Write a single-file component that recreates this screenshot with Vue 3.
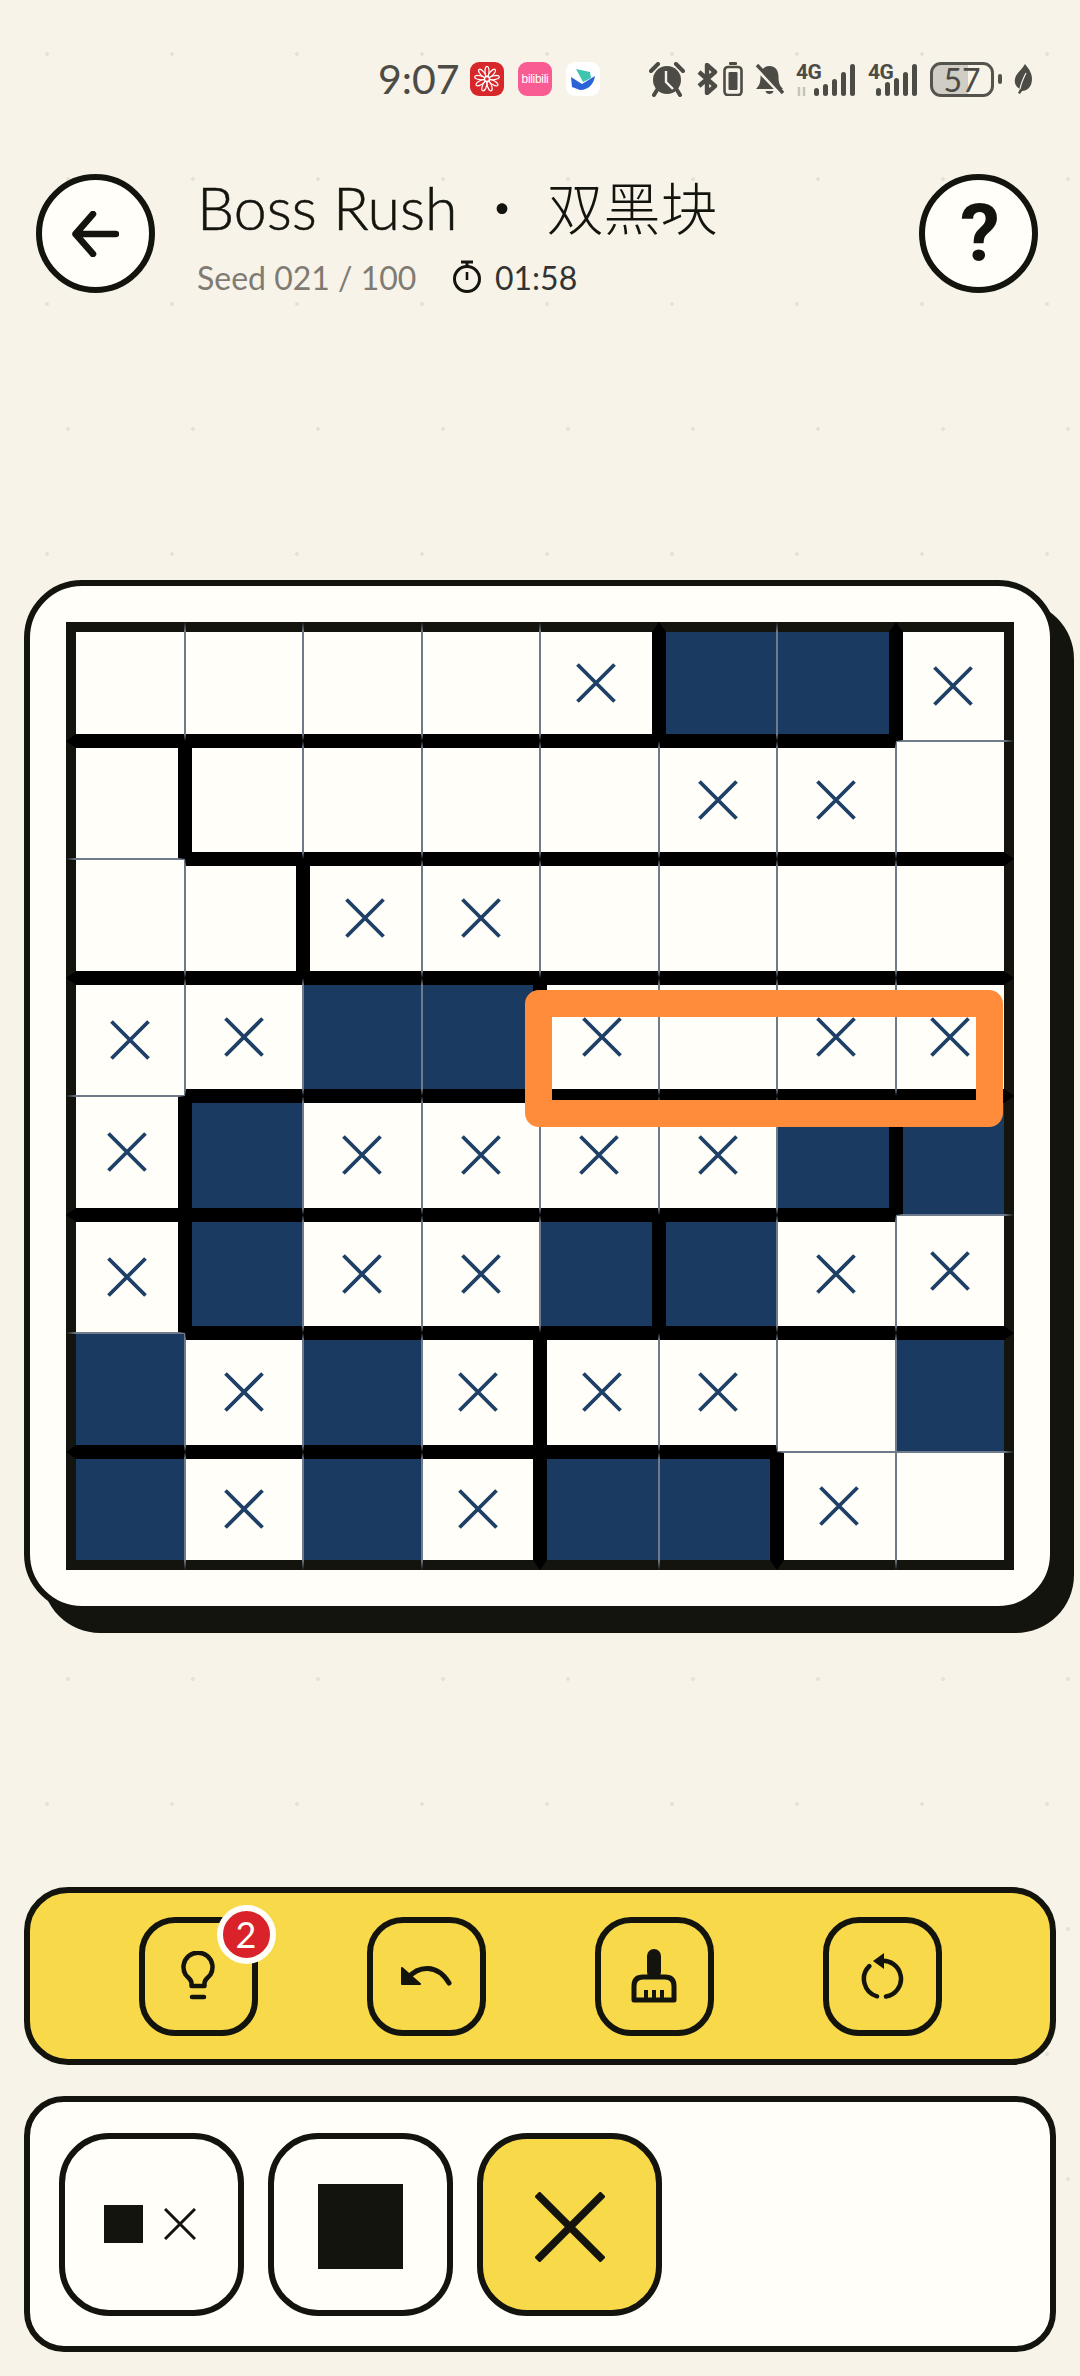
<script setup>
import { computed } from 'vue';

// . empty, x cross, f filled
const rows = [
  '....xffx',
  '.....xx.',
  '..xx....',
  'xxffx.xx',
  'xfxxxxff',
  'xfxxffxx',
  'fxfxxx.f',
  'fxfxffx.',
];

// thick line below row r, listed by column
const thickBelow = [
  [0, 1, 2, 3, 4, 5, 6],
  [1, 2, 3, 4, 5, 6, 7],
  [0, 1, 2, 3, 4, 5, 6, 7],
  [1, 2, 3, 4, 5, 6, 7],
  [0, 1, 2, 3, 4, 5, 6],
  [1, 2, 3, 4, 5, 6, 7],
  [0, 1, 2, 3, 4, 5],
];

// thick line right of column c, listed by row
const thickRight = [
  [1, 4, 5],
  [2],
  [],
  [3, 6, 7],
  [0, 5],
  [7],
  [0, 4],
];

const cells = computed(() => {
  const out = [];
  rows.forEach((row, r) => {
    row.split('').forEach((kind, c) => {
      out.push({
        id: r + '-' + c,
        kind,
        classes: {
          filled: kind === 'f',
          'edge-top': r === 0,
          'edge-bottom': r === 7,
          'edge-left': c === 0,
          'edge-right': c === 7,
          'thick-top': r > 0 && thickBelow[r - 1].includes(c),
          'thick-bottom': r < 7 && thickBelow[r].includes(c),
          'thick-left': c > 0 && thickRight[c - 1].includes(r),
          'thick-right': c < 7 && thickRight[c].includes(r),
        },
      });
    });
  });
  return out;
});

const petals = [0, 40, 80, 120, 160, 200, 240, 280, 320];
</script>

<template>
  <div class="page">
    <div class="status">
      <div class="status-left">
        <span class="clock">9:07</span>
        <div class="app app-red">
          <svg width="26" height="26" viewBox="0 0 26 26">
            <ellipse
              v-for="a in petals"
              :key="a"
              cx="13"
              cy="5.5"
              rx="2"
              ry="5"
              fill="none"
              stroke="#fff"
              stroke-width="1.2"
              :transform="'rotate(' + a + ' 13 13)'"
            />
            <circle cx="13" cy="13" r="2.4" fill="#d8272a" stroke="#fff" stroke-width="1.2" />
          </svg>
        </div>
        <div class="app app-pink"><span>bilibili</span></div>
        <div class="app app-white">
          <svg width="26" height="24" viewBox="0 0 26 24">
            <path d="M6 2 L20 5 L21 11 L13 15 Z" fill="#3fc4b0" />
            <path d="M1 10 L12 17 L25 9 C24 16 19 23 10 23 L2 20 Z" fill="#2a62d8" />
          </svg>
        </div>
      </div>
      <div class="status-right">
        <svg class="alarm" width="36" height="35" viewBox="0 0 36 35">
          <path d="M2 9 L9 2 M34 9 L27 2" stroke="#4c4b46" stroke-width="4" stroke-linecap="round" />
          <path d="M8 28 L5 33 M28 28 L31 33" stroke="#4c4b46" stroke-width="4" stroke-linecap="round" />
          <circle cx="18" cy="18" r="14" fill="#4c4b46" />
          <path d="M17 9 V20 L24 27" fill="none" stroke="#f7f3e8" stroke-width="2.4" />
        </svg>
        <div class="bt-batt">
          <svg width="21" height="32" viewBox="0 0 21 32">
            <path d="M2 9 L18 23 L10 30 V2 L18 9 L2 23" fill="none" stroke="#4c4b46" stroke-width="4.4" stroke-linejoin="round" />
          </svg>
          <svg width="20" height="34" viewBox="0 0 20 34">
            <rect x="6" y="0" width="8" height="3" rx="1" fill="#4c4b46" />
            <rect x="1.5" y="5" width="17" height="28" rx="3.5" fill="none" stroke="#4c4b46" stroke-width="2.6" />
            <rect x="5.5" y="10" width="9" height="18" rx="1" fill="#4c4b46" />
          </svg>
        </div>
        <svg width="29" height="33" viewBox="0 0 29 33">
          <path d="M14.5 3 C21 3 23.5 8 23.5 14 C23.5 20 25 23 28 26 H1 C4 23 5.5 20 5.5 14 C5.5 8 8 3 14.5 3 Z" fill="#4c4b46" />
          <path d="M10.5 28 H18.5 C18 32 11 32 10.5 28 Z" fill="#4c4b46" />
          <path d="M1 4 L27 31" stroke="#f7f3e8" stroke-width="5" />
          <path d="M2 2 L28 30" stroke="#4c4b46" stroke-width="3.4" />
        </svg>
        <div class="signal">
          <span class="net">4G</span>
          <svg width="60" height="33" viewBox="0 0 60 33">
            <path d="M3 24 V33 M8 24 V33" stroke="#c6c3bb" stroke-width="2.5" />
            <rect x="18" y="25" width="5" height="8" rx="2.5" fill="#4c4b46" />
            <rect x="27" y="21" width="5" height="12" rx="2.5" fill="#4c4b46" />
            <rect x="36" y="16" width="5" height="17" rx="2.5" fill="#4c4b46" />
            <rect x="45" y="9" width="5" height="24" rx="2.5" fill="#4c4b46" />
            <rect x="54" y="1" width="5" height="32" rx="2.5" fill="#4c4b46" />
          </svg>
        </div>
        <div class="signal">
          <span class="net">4G</span>
          <svg width="50" height="33" viewBox="0 0 50 33">
            <rect x="8" y="25" width="5" height="8" rx="2.5" fill="#4c4b46" />
            <rect x="17" y="19" width="5" height="14" rx="2.5" fill="#4c4b46" />
            <rect x="26" y="15" width="5" height="18" rx="2.5" fill="#4c4b46" />
            <rect x="35" y="9" width="5" height="24" rx="2.5" fill="#4c4b46" />
            <rect x="44" y="1" width="5" height="32" rx="2.5" fill="#4c4b46" />
          </svg>
        </div>
        <div class="battery">
          <div class="battery-body"><span>57</span></div>
          <div class="battery-nub"></div>
        </div>
        <svg width="18" height="30" viewBox="0 0 18 30">
          <path d="M11 0 C16 6 18 10 18 15 C18 23 13 27 8 27 L6 30 L4 29 L6 25 C2 23 0 19 1 15 C2 9 8 6 11 0 Z" fill="#4c4b46" />
          <path d="M6 25 C7 19 9 15 12 9" fill="none" stroke="#f7f3e8" stroke-width="1.2" />
        </svg>
      </div>
    </div>

    <div class="header">
      <button class="round-btn">
        <svg width="47" height="46" viewBox="0 0 47 46">
          <path d="M21 3 L3.5 23 L21 43 M3.5 23 H44" fill="none" stroke="#14140f" stroke-width="6.5" stroke-linecap="round" stroke-linejoin="round" />
        </svg>
      </button>
      <div class="title-block">
        <div class="title">Boss Rush <span class="dot">・</span> <span class="cjk">双黑块</span></div>
        <div class="sub">
          <span class="seed">Seed 021 / 100</span>
          <svg class="timer" width="30" height="34" viewBox="0 0 30 34">
            <path d="M9 2 H21 M15 2 V7" stroke="#14140f" stroke-width="3" />
            <circle cx="15" cy="19" r="12.5" fill="none" stroke="#14140f" stroke-width="3" />
            <path d="M15 12 V20" stroke="#14140f" stroke-width="2.6" />
          </svg>
          <span class="time">01:58</span>
        </div>
      </div>
      <button class="round-btn help">?</button>
    </div>

    <div class="card">
      <div class="board">
        <div v-for="cell in cells" :key="cell.id" class="cell" :class="cell.classes">
          <svg v-if="cell.kind === 'x'" width="40" height="40" viewBox="0 0 40 40">
            <path d="M1.5 1.5 L38.5 38.5 M38.5 1.5 L1.5 38.5" stroke="#1e3f66" stroke-width="3.8" />
          </svg>
        </div>
        <div class="hint-box"></div>
      </div>
    </div>

    <div class="toolbar">
      <button class="tool">
        <svg width="34" height="50" viewBox="0 0 34 50">
          <path d="M10.5 35 V32 C10.5 28.5 7 27 4.5 23.5 A14.5 14.5 0 1 1 29.5 23.5 C27 27 23.5 28.5 23.5 32 V35 Z" fill="none" stroke="#14140f" stroke-width="4.5" stroke-linejoin="round" />
          <path d="M11 46 H23" stroke="#14140f" stroke-width="4.5" stroke-linecap="round" />
        </svg>
        <span class="badge">2</span>
      </button>
      <button class="tool">
        <svg width="52" height="24" viewBox="0 0 52 24">
          <path d="M2 4 L2 20 L20 20 Z" fill="#14140f" stroke="#14140f" stroke-width="2" stroke-linejoin="round" />
          <path d="M8 14 C18 2 37 -1 49 19" fill="none" stroke="#14140f" stroke-width="5" stroke-linecap="round" />
        </svg>
      </button>
      <button class="tool">
        <svg width="46" height="54" viewBox="0 0 46 54">
          <rect x="16" y="0" width="14" height="30" rx="7" fill="#14140f" />
          <path d="M3 51 V37 Q3 28 12 28 H34 Q43 28 43 37 V51 Z" fill="none" stroke="#14140f" stroke-width="5" stroke-linejoin="round" />
          <path d="M15 41 V51 M23 41 V51 M31 41 V51" stroke="#14140f" stroke-width="4" />
        </svg>
      </button>
      <button class="tool">
        <svg width="44" height="46" viewBox="0 0 44 46">
          <path d="M20 8 A18 18 0 0 1 26 43.5 M17 43.3 A18 18 0 0 1 9.3 13.2" fill="none" stroke="#14140f" stroke-width="4.5" stroke-linecap="round" />
          <path d="M24 0 L24 16 L13 8 Z" fill="#14140f" />
        </svg>
      </button>
    </div>

    <div class="panel">
      <button class="mode">
        <span class="mini-square"></span>
        <svg width="32" height="32" viewBox="0 0 32 32">
          <path d="M1 1 L31 31 M31 1 L1 31" stroke="#14140f" stroke-width="3" />
        </svg>
      </button>
      <button class="mode">
        <span class="big-square"></span>
      </button>
      <button class="mode active">
        <svg class="big-x" width="70" height="70" viewBox="0 0 70 70">
          <path d="M2 2 L68 68 M68 2 L2 68" stroke="#14140f" stroke-width="7.5" />
        </svg>
      </button>
    </div>
  </div>
</template>

<style scoped>
.page {
  width: 1080px;
  height: 2376px;
  overflow: hidden;
  display: flex;
  flex-direction: column;
  background-color: #f7f3e8;
  background-image:
    radial-gradient(circle at 47px 54px, #e6e2d8 1.6px, transparent 2.2px),
    radial-gradient(circle at 68px 179px, #e6e2d8 1.6px, transparent 2.2px);
  background-size: 125px 250px;
  font-family: Lato, "Noto Sans CJK SC", sans-serif;
}

button {
  padding: 0;
  font-family: inherit;
  cursor: pointer;
}

/* status bar */
.status {
  display: flex;
  align-items: center;
  height: 36px;
  margin-top: 61px;
  padding-left: 378px;
}

.status-left {
  display: flex;
  align-items: center;
  gap: 14px;
}

.clock {
  width: 78px;
  font-size: 41px;
  line-height: 36px;
  color: #4c4b46;
}

.app {
  width: 34px;
  height: 34px;
  border-radius: 9px;
  display: flex;
  align-items: center;
  justify-content: center;
}

.app-red {
  background: #d8272a;
}

.app-pink {
  background: #f95b93;
  color: #fff;
  font-family: "Liberation Sans", sans-serif;
  font-size: 12px;
  letter-spacing: -0.3px;
}

.app-white {
  background: #fff;
}

.status-right {
  display: flex;
  align-items: center;
  gap: 12px;
  margin-left: 49px;
}

.bt-batt {
  display: flex;
  align-items: center;
  gap: 5px;
}

.signal {
  position: relative;
  height: 33px;
}

.net {
  position: absolute;
  left: 0;
  top: 0;
  font-family: Roboto, sans-serif;
  font-size: 21px;
  font-weight: 700;
  line-height: 18px;
  letter-spacing: -0.5px;
  color: #4c4b46;
}

.battery {
  display: flex;
  align-items: center;
  gap: 4px;
}

.battery-body {
  box-sizing: border-box;
  width: 64px;
  height: 35px;
  border: 3px solid #55534e;
  border-radius: 11px;
  background: linear-gradient(to right, #d0cdc5 60%, transparent 60%);
  display: flex;
  align-items: center;
  justify-content: center;
  font-size: 32px;
  color: #4c4b46;
}

.battery-nub {
  width: 4px;
  height: 10px;
  border-radius: 2px;
  background: #55534e;
}

/* header */
.header {
  display: flex;
  align-items: flex-start;
  height: 119px;
  margin-top: 77px;
  padding: 0 42px 0 36px;
}

.round-btn {
  box-sizing: border-box;
  flex: none;
  width: 119px;
  height: 119px;
  border: 6px solid #14140f;
  border-radius: 50%;
  background: #fffef8;
  display: flex;
  align-items: center;
  justify-content: center;
}

.help {
  padding-left: 3px;
  font-family: Roboto, sans-serif;
  font-size: 80px;
  font-weight: 700;
  color: #14140f;
  margin-left: auto;
}

.title-block {
  margin-left: 42px;
}

.title {
  margin-top: -4px;
  font-size: 59px;
  font-weight: 300;
  line-height: 70px;
  color: #14140f;
  -webkit-text-stroke: 0.5px #14140f;
  white-space: nowrap;
}

.dot,
.cjk {
  font-family: "Noto Sans CJK SC", sans-serif;
  font-size: 57px;
  -webkit-text-stroke: 0;
}

.sub {
  display: flex;
  align-items: center;
  height: 40px;
  margin-top: 14px;
  font-size: 32px;
  white-space: nowrap;
}

.seed {
  width: 219px;
  color: #7f7b73;
}

.timer {
  margin-left: 36px;
}

.time {
  margin-left: 13px;
  color: #333;
}

/* board */
.card {
  box-sizing: border-box;
  width: 1032px;
  height: 1032px;
  margin: 287px 0 0 24px;
  padding: 36px;
  border: 6px solid #14140f;
  border-radius: 58px;
  background: #fffef8;
  box-shadow: 18px 21px 0 #14140f;
}

.board {
  position: relative;
  width: 948px;
  height: 948px;
  display: grid;
  grid-template-columns: repeat(8, 1fr);
  grid-template-rows: repeat(8, 1fr);
}

.cell {
  box-sizing: border-box;
  border: 1px solid #6f7b8a;
  background: #fffef8;
  display: flex;
  align-items: center;
  justify-content: center;
}

.filled {
  background: #1a3a62;
}

.thick-top {
  border-top: 7px solid #000;
}

.thick-bottom {
  border-bottom: 7px solid #000;
}

.thick-left {
  border-left: 7px solid #000;
}

.thick-right {
  border-right: 7px solid #000;
}

.edge-top {
  border-top: 10px solid #14140f;
}

.edge-bottom {
  border-bottom: 10px solid #14140f;
}

.edge-left {
  border-left: 10px solid #14140f;
}

.edge-right {
  border-right: 10px solid #14140f;
}

.hint-box {
  position: absolute;
  left: 459px;
  top: 368px;
  box-sizing: border-box;
  width: 478px;
  height: 137px;
  border: 27px solid #ff8c3a;
  border-radius: 14px;
}

/* toolbar */
.toolbar {
  box-sizing: border-box;
  width: 1032px;
  height: 178px;
  margin: 275px 0 0 24px;
  border: 6px solid #14140f;
  border-radius: 44px;
  background: #f8d94a;
  display: flex;
  align-items: center;
  justify-content: center;
  gap: 109px;
}

.tool {
  position: relative;
  box-sizing: border-box;
  width: 119px;
  height: 119px;
  border: 6px solid #14140f;
  border-radius: 36px;
  background: transparent;
  display: flex;
  align-items: center;
  justify-content: center;
}

.badge {
  position: absolute;
  top: -18px;
  right: -24px;
  box-sizing: border-box;
  width: 59px;
  height: 59px;
  border: 6px solid #fffef8;
  border-radius: 50%;
  background: #d9222a;
  color: #fffef8;
  font-size: 36px;
  line-height: 47px;
  text-align: center;
}

/* mode picker */
.panel {
  box-sizing: border-box;
  width: 1032px;
  height: 256px;
  margin: 31px 0 0 24px;
  padding: 0 29px;
  border: 6px solid #14140f;
  border-radius: 40px;
  background: #fffef8;
  display: flex;
  align-items: center;
  gap: 24px;
}

.mode {
  box-sizing: border-box;
  width: 185px;
  height: 183px;
  border: 6px solid #14140f;
  border-radius: 50px;
  background: #fffef8;
  display: flex;
  align-items: center;
  justify-content: center;
  gap: 21px;
}

.active {
  background: #f8d94a;
}

.mini-square {
  width: 39px;
  height: 38px;
  margin-left: -3px;
  background: #14140f;
}

.big-square {
  width: 85px;
  height: 85px;
  margin-top: 5px;
  background: #14140f;
}

.big-x {
  margin-top: 5px;
}
</style>
